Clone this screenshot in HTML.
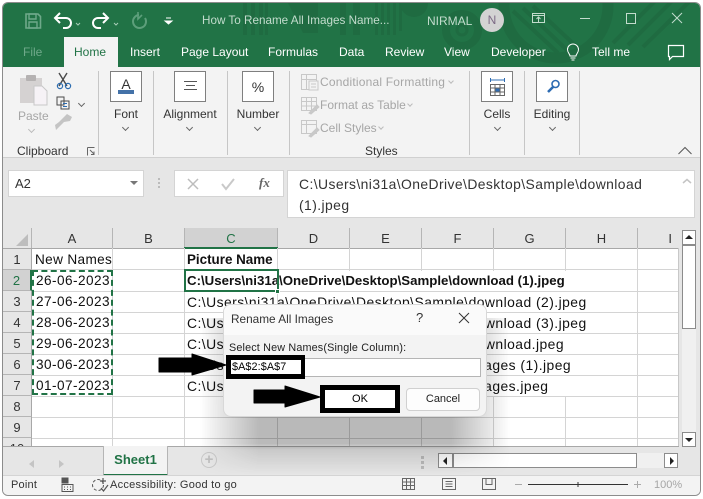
<!DOCTYPE html>
<html><head><meta charset="utf-8"><style>
*{box-sizing:border-box}
html,body{margin:0;padding:0;width:703px;height:499px;overflow:hidden;background:#fff}
body{font-family:"Liberation Sans",sans-serif;position:relative}
.a{position:absolute;white-space:nowrap}
.tab{position:absolute;top:44px;font-size:12px;color:#fff;line-height:16px;white-space:nowrap}
.b{position:absolute;top:71px;width:32px;height:31px;background:#fff;border:1px solid #7f7f7f}
.rl{position:absolute;font-size:12px;color:#333;line-height:15px;white-space:nowrap;text-align:center}
.g{color:#a6a6a6}
.sep{position:absolute;top:71px;width:1px;height:84px;background:#c6c6c6}
.ch{position:absolute;top:228px;height:20px;font-size:13px;color:#333;text-align:center;line-height:21px;border-right:1px solid #b5b5b5;background:#e6e6e6}
.rh{position:absolute;left:3px;width:29px;height:21px;font-size:13px;color:#333;text-align:center;line-height:21px;background:#e6e6e6;border-bottom:1px solid #b5b5b5;border-right:1px solid #a8a8a8}
.v{position:absolute;top:248px;width:1px;height:198px;background:#d4d4d4}
.h{position:absolute;left:32px;width:646px;height:1px;background:#d4d4d4}
.c{position:absolute;font-size:13.6px;color:#111;line-height:18px;white-space:nowrap}
.d{letter-spacing:.45px}
.p{font-size:13.9px;letter-spacing:.45px}
.chev{position:absolute;width:5px;height:5px;border-right:1px solid #666;border-bottom:1px solid #666;transform:rotate(45deg)}
</style></head><body>
<!-- window -->
<div class="a" style="left:2px;top:2px;width:699px;height:494px;background:#e6e6e6;border:1px solid #8c8c8c;border-radius:6px;overflow:hidden"></div>
<div class="a" style="left:3px;top:3px;width:697px;height:64px;background:#217346;border-radius:5px 5px 0 0;overflow:hidden">
<svg width="697" height="64" style="position:absolute;left:0;top:0">
<g fill="#1f6b41">
<rect x="240" y="0" width="4" height="32"/><rect x="248" y="0" width="4" height="32"/><rect x="256" y="0" width="4" height="32"/><rect x="262" y="0" width="3" height="32"/>
<polygon points="285,0 315,0 315,30 300,30"/><rect x="337" y="0" width="6" height="32"/><rect x="350" y="0" width="7" height="32"/>
<rect x="372" y="0" width="3" height="32"/><rect x="378" y="0" width="3" height="32"/><rect x="384" y="0" width="3" height="32"/><rect x="390" y="0" width="3" height="32"/><rect x="396" y="0" width="3" height="28"/>
<circle cx="411" cy="0" r="14"/>
</g>
<circle cx="459" cy="27" r="16" fill="none" stroke="#1f6b41" stroke-width="8"/>
<circle cx="459" cy="27" r="5" fill="none" stroke="#1f6b41" stroke-width="3"/>
<circle cx="553" cy="3" r="52" fill="none" stroke="#1f6b41" stroke-width="11"/>
<g stroke="#1f6b41" stroke-width="4"><path d="M510 8 L555 50M520 5 L565 48M530 3 L575 45"/><path d="M610 40 L655 -5M625 42 L672 -5M640 44 L690 -5"/></g>
</svg></div>
<!-- QAT -->
<svg class="a" style="left:20px;top:8px" width="180" height="24" fill="none">
<path d="M6 6h12l2.500 2.500V20H6z" stroke="#6fa98a" stroke-width="1.600"/><path d="M9 6h7v5H9zM9 14h8v6H9z" stroke="#6fa98a" stroke-width="1.400"/>
<path d="M36 10h10a4.500 4.500 0 0 1 0 10h-3" stroke="#fff" stroke-width="2"/><path d="M40 5l-5 5 5 5" stroke="#fff" stroke-width="2"/>
<path d="M56 15l2 2 2-2" stroke="#a8cdb8"/>
<path d="M87 10H78a4.500 4.500 0 0 0 0 10h3" stroke="#fff" stroke-width="2"/><path d="M83 5l5 5-5 5" stroke="#fff" stroke-width="2"/>
<path d="M94 15l2 2 2-2" stroke="#a8cdb8"/>
<path d="M119 7a6.500 6.500 0 1 0 6 3" stroke="#5d9f7b" stroke-width="2"/><path d="M118 4v7l4-4" stroke="#5d9f7b" stroke-width="1.600"/>
<path d="M146 10h5M145 13h7l-3.500 3z" stroke="#fff" fill="#fff" stroke-width="1"/>
</svg>
<div class="a" style="left:202px;top:13px;font-size:11.7px;color:#c3dccd;line-height:16px">How To Rename All Images Name...</div>
<div class="a" style="left:427px;top:13px;font-size:12px;color:#c3dccd;line-height:16px">NIRMAL</div>
<div class="a" style="left:480px;top:8px;width:24px;height:24px;border-radius:12px;background:#d3d3d3;color:#7c6a85;font-size:12px;text-align:center;line-height:24px">N</div>
<svg class="a" style="left:530px;top:8px" width="165" height="22" fill="none" stroke="#c3dccd">
<path d="M2.500 5.500h12v9h-12zM2.500 7.500h12M8.500 14v-5M6.500 11l2-2 2 2"/>
<path d="M50 10.500h10" stroke-width="1"/>
<rect x="96.500" y="5.500" width="9" height="10"/>
<path d="M142 5l10 10M152 5l-10 10"/>
</svg>
<!-- tabs -->
<div class="tab" style="left:23px;color:#6fa98a">File</div>
<div class="a" style="left:64px;top:37px;width:54px;height:30px;background:#f3f3f3"></div>
<div class="tab" style="left:74px;color:#217346">Home</div>
<div class="tab" style="left:130px">Insert</div>
<div class="tab" style="left:181px">Page Layout</div>
<div class="tab" style="left:268px">Formulas</div>
<div class="tab" style="left:339px">Data</div>
<div class="tab" style="left:385px">Review</div>
<div class="tab" style="left:444px">View</div>
<div class="tab" style="left:491px">Developer</div>
<div class="tab" style="left:592px">Tell me</div>
<svg class="a" style="left:565px;top:43px" width="130" height="20" fill="none" stroke="#fff">
<path d="M5 13c0-2-2.500-3-2.500-6.500a5.500 5.500 0 0 1 11 0C13.500 10 11 11 11 13zM5.500 15h5M6.500 17h3"/>
<path d="M103.500 2.500h15v11h-11l-3 3v-3h-1z" stroke-width="1.200"/>
</svg>
<!-- ribbon -->
<div class="a" style="left:3px;top:67px;width:697px;height:91px;background:#f3f3f3;border-bottom:1px solid #d0d0d0"></div>
<svg class="a" style="left:15px;top:70px" width="70" height="66" fill="none">
<rect x="5" y="8" width="22" height="25" fill="#d5d2d2"/><rect x="11" y="5" width="10" height="6" rx="1" fill="#b5b2b2"/>
<path d="M19 16h8l5 5v14H19z" fill="#f6f2f6" stroke="#c8c8c8"/>
<path d="M44 3l8 13M52 3L44 16" stroke="#4a4a4a" stroke-width="1.400"/><circle cx="45" cy="16" r="2.600" stroke="#2b6cb0" stroke-width="1.200"/><circle cx="53" cy="16" r="2.600" stroke="#2b6cb0" stroke-width="1.200"/>
<path d="M42 27h7v8h-7zM46 31h8v8h-8z" stroke="#4a4a4a" fill="#f3f3f3"/><path d="M48 33.500h4M48 36.500h4" stroke="#2b6cb0"/>
<path d="M41 60l8-8 6-1 2-4-5-3-4 4-4 4-4 3z" fill="#c4c4c4"/>
</svg>
<div class="rl g" style="left:18px;top:109px;width:28px">Paste</div>
<div class="chev" style="left:29px;top:127px;border-color:#bbb"></div>
<div class="chev" style="left:79px;top:101px"></div>
<div class="rl" style="left:17px;top:144px">Clipboard</div>
<svg class="a" style="left:85px;top:146px" width="12" height="11" fill="none" stroke="#666"><path d="M2.500 1.500h7M2.500 1.500v8M5 4l4 4M9 5.500V8.500H6" /></svg>
<div class="sep" style="left:98px"></div><div class="sep" style="left:153px"></div><div class="sep" style="left:227px"></div><div class="sep" style="left:289px"></div><div class="sep" style="left:469px"></div><div class="sep" style="left:524px"></div><div class="sep" style="left:579px"></div>
<div class="b" style="left:110px"><div class="a" style="left:7px;top:5px;width:16px;text-align:center;font-size:14px;color:#333;line-height:14px">A</div><div class="a" style="left:7px;top:18px;width:16px;height:4px;background:#4472a8"></div></div>
<div class="rl" style="left:110px;top:107px;width:32px">Font</div><div class="chev" style="left:123px;top:125px"></div>
<div class="b" style="left:174px"><svg style="position:absolute;left:8px;top:9px" width="15" height="12" stroke="#555"><path d="M1 .5h13M3 4.500h9M1 8.500h13"/></svg></div>
<div class="rl" style="left:160px;top:107px;width:60px">Alignment</div><div class="chev" style="left:187px;top:125px"></div>
<div class="b" style="left:242px"><div class="a" style="left:0;top:7px;width:30px;text-align:center;font-size:14px;color:#333;line-height:16px">%</div></div>
<div class="rl" style="left:234px;top:107px;width:48px">Number</div><div class="chev" style="left:255px;top:125px"></div>
<svg class="a" style="left:300px;top:72px" width="20" height="66" fill="none" stroke="#c8c8c8">
<path d="M1.500 2.500h15v15h-15zM1.500 7.500h15M6.500 2.500v15"/><rect x="9" y="9" width="9" height="9" fill="#f3f3f3"/><path d="M11 12h5M11 15h5" />
<path d="M1.500 25.500h15v13h-15zM1.500 29.500h15M6.500 25.500v13M11.500 25.500v13M1.500 34h15"/><path d="M9 41l8-8 2 2-8 7z" fill="#c9c9c9"/>
<path d="M1.500 48.500h15v13h-15zM1.500 52.500h15M6.500 48.500v13"/><path d="M9 64l8-8 2 2-8 7z" fill="#c9c9c9"/>
</svg>
<div class="rl g" style="left:320px;top:75px;letter-spacing:.2px">Conditional Formatting</div>
<div class="rl g" style="left:320px;top:98px">Format as Table</div>
<div class="rl g" style="left:320px;top:121px">Cell Styles</div>
<div class="chev" style="left:449px;top:79px;border-color:#bbb;width:4px;height:4px"></div>
<div class="chev" style="left:408px;top:102px;border-color:#bbb;width:4px;height:4px"></div>
<div class="chev" style="left:379px;top:125px;border-color:#bbb;width:4px;height:4px"></div>
<div class="rl" style="left:365px;top:144px">Styles</div>
<div class="b" style="left:481px"><svg style="position:absolute;left:7px;top:5px" width="18" height="21" fill="none" stroke="#666"><path d="M1.500 1v4M15.500 1v4M2 3h13" stroke="#2e6cb3"/><path d="M1.500 7.500h14v11h-14zM1.500 11h14M1.500 15h14M6 7.500v11M11 7.500v11"/><rect x="6" y="11" width="5" height="4" fill="#2e6cb3"/></svg></div>
<div class="rl" style="left:481px;top:107px;width:32px">Cells</div><div class="chev" style="left:495px;top:125px"></div>
<div class="b" style="left:536px"><svg style="position:absolute;left:8px;top:6px" width="16" height="18" fill="none" stroke="#2e6cb3"><circle cx="10.500" cy="6" r="3.500" stroke-width="1.600"/><path d="M8 9l-5 5" stroke-width="2.600"/></svg></div>
<div class="rl" style="left:532px;top:107px;width:40px">Editing</div><div class="chev" style="left:550px;top:125px"></div>
<svg class="a" style="left:677px;top:146px" width="16" height="10" fill="none" stroke="#555"><path d="M1.500 8L8 1.500 14.500 8"/></svg>
<!-- formula bar -->
<div class="a" style="left:8px;top:170px;width:136px;height:27px;background:#fff;border:1px solid #d4d4d4;font-size:13px;color:#333;line-height:25px;padding-left:6px">A2</div>
<div class="a" style="left:130px;top:181px;border-left:4px solid transparent;border-right:4px solid transparent;border-top:4px solid #777"></div>
<div class="a" style="left:158px;top:178px;width:2px;height:2px;background:#bbb;box-shadow:0 4px #bbb,0 8px #bbb"></div>
<div class="a" style="left:174px;top:170px;width:110px;height:27px;background:#fff;border:1px solid #d4d4d4"></div>
<svg class="a" style="left:186px;top:175px" width="90" height="18" fill="none"><path d="M2 4l10 10M12 4L2 14" stroke="#bdbdbd" stroke-width="1.500"/><path d="M36 9l4 5 8-10" stroke="#c9c9c9" stroke-width="2"/></svg>
<div class="a" style="left:259px;top:174px;font:italic bold 13px 'Liberation Serif',serif;color:#666;line-height:17px">fx</div>
<div class="a" style="left:287px;top:170px;width:408px;height:48px;background:#fff;border:1px solid #d4d4d4;font-size:13.9px;letter-spacing:.42px;color:#333;line-height:21px;padding:3px 0 0 11px;white-space:normal">C:\Users\ni31a\OneDrive\Desktop\Sample\download<br>(1).jpeg</div>
<svg class="a" style="left:682px;top:178px" width="10" height="7" fill="none" stroke="#c4c4c4" stroke-width="1.500"><path d="M1 5l4-3.500L9 5"/></svg>
<!-- grid -->
<div class="a" style="left:3px;top:228px;width:676px;height:218px;background:#fff"></div>
<div class="ch" style="left:3px;width:29px"></div>
<div class="a" style="left:16px;top:234px;width:0;height:0;border-left:12px solid transparent;border-bottom:12px solid #bdbdbd"></div>
<div class="ch" style="left:32px;width:81px">A</div>
<div class="ch" style="left:113px;width:72px">B</div>
<div class="ch" style="left:185px;width:93px;background:#d2d2d2;color:#217346">C</div>
<div class="ch" style="left:278px;width:72px">D</div>
<div class="ch" style="left:350px;width:72px">E</div>
<div class="ch" style="left:422px;width:72px">F</div>
<div class="ch" style="left:494px;width:72px">G</div>
<div class="ch" style="left:566px;width:72px">H</div>
<div class="ch" style="left:638px;width:41px;border-right:0;text-align:right;padding-right:7px">I</div>
<div class="a" style="left:3px;top:248px;width:676px;height:1px;background:#a8a8a8"></div>
<div class="a" style="left:184px;top:247px;width:94px;height:2px;background:#217346"></div>
<div class="rh" style="top:249px">1</div>
<div class="rh" style="top:270px;background:#d2d2d2;color:#217346;border-right:2px solid #217346">2</div>
<div class="rh" style="top:291px">3</div><div class="rh" style="top:312px">4</div><div class="rh" style="top:333px">5</div><div class="rh" style="top:354px">6</div><div class="rh" style="top:375px">7</div><div class="rh" style="top:396px">8</div><div class="rh" style="top:417px">9</div><div class="rh" style="top:438px;height:8px;overflow:hidden;border-bottom:0">10</div>
<div class="v" style="left:112px"></div><div class="v" style="left:184px"></div><div class="v" style="left:277px"></div><div class="v" style="left:421px"></div><div class="v" style="left:493px"></div><div class="v" style="left:565px"></div><div class="v" style="left:637px"></div><div class="v" style="left:349px"></div>
<div class="a" style="left:678px;top:248px;width:1px;height:198px;background:#c8c8c8"></div>
<div class="h" style="top:269px"></div><div class="h" style="top:291px"></div><div class="h" style="top:312px"></div><div class="h" style="top:333px"></div><div class="h" style="top:354px"></div><div class="h" style="top:375px"></div><div class="h" style="top:396px"></div><div class="h" style="top:417px"></div><div class="h" style="top:438px"></div>
<div class="c" style="left:35px;top:251px;font-size:13.6px;letter-spacing:.35px">New Names</div>
<div class="c" style="left:187px;top:251px;font-weight:bold;font-size:13.400px">Picture Name</div>
<div class="a" style="left:278px;top:271px;width:309px;height:20px;background:#fff"></div>
<div class="a" style="left:278px;top:292px;width:309px;height:20px;background:#fff"></div>
<div class="a" style="left:278px;top:313px;width:309px;height:20px;background:#fff"></div>
<div class="a" style="left:278px;top:334px;width:309px;height:20px;background:#fff"></div>
<div class="a" style="left:278px;top:355px;width:309px;height:20px;background:#fff"></div>
<div class="a" style="left:278px;top:376px;width:309px;height:20px;background:#fff"></div>
<div class="c d" style="left:36px;top:272px">26-06-2023</div>
<div class="c d" style="left:36px;top:293px">27-06-2023</div>
<div class="c d" style="left:36px;top:314px">28-06-2023</div>
<div class="c d" style="left:36px;top:335px">29-06-2023</div>
<div class="c d" style="left:36px;top:356px">30-06-2023</div>
<div class="c d" style="left:36px;top:377px">01-07-2023</div>
<div class="c" style="left:187px;top:272px;font-weight:bold;font-size:13.25px">C:\Users\ni31a\OneDrive\Desktop\Sample\download (1).jpeg</div>
<div class="c p" style="left:187px;top:293px">C:\Users\ni31a\OneDrive\Desktop\Sample\download (2).jpeg</div>
<div class="c p" style="left:187px;top:314px">C:\Users\ni31a\OneDrive\Desktop\Sample\download (3).jpeg</div>
<div class="c p" style="left:187px;top:335px">C:\Users\ni31a\OneDrive\Desktop\Sample\download.jpeg</div>
<div class="c p" style="left:187px;top:356px">C:\Users\ni31a\OneDrive\Desktop\Sample\images (1).jpeg</div>
<div class="c p" style="left:187px;top:377px">C:\Users\ni31a\OneDrive\Desktop\Sample\images.jpeg</div>
<!-- selection -->
<div class="a" style="left:32px;top:270px;width:81px;height:125px;border:2px dashed #217346"></div>
<div class="a" style="left:184px;top:269px;width:95px;height:23px;border:2px solid #217346"></div>
<div class="a" style="left:275px;top:289px;width:5px;height:5px;background:#217346;border:1px solid #fff"></div>
<!-- scrollbars -->
<div class="a" style="left:682px;top:230px;width:14px;height:217px;background:#f0f0f0"></div>
<div class="a" style="left:682px;top:230px;width:14px;height:15px;background:#fff;border:1px solid #8c8c8c"></div>
<div class="a" style="left:685px;top:235px;border-left:4px solid transparent;border-right:4px solid transparent;border-bottom:4px solid #222"></div>
<div class="a" style="left:682px;top:245px;width:14px;height:84px;background:#fff;border:1px solid #8c8c8c"></div>
<div class="a" style="left:682px;top:432px;width:14px;height:15px;background:#fff;border:1px solid #8c8c8c"></div>
<div class="a" style="left:685px;top:438px;border-left:4px solid transparent;border-right:4px solid transparent;border-top:4px solid #222"></div>
<div class="a" style="left:3px;top:446px;height:1px;background:#a8a8a8;width:676px"></div>
<!-- sheet bar -->
<div class="a" style="left:29px;top:460px;border-right:5px solid #c4c4c4;border-top:4px solid transparent;border-bottom:4px solid transparent"></div>
<div class="a" style="left:59px;top:460px;border-left:5px solid #c4c4c4;border-top:4px solid transparent;border-bottom:4px solid transparent"></div>
<div class="a" style="left:103px;top:446px;width:65px;height:30px;background:#f3f3f3;border-left:1px solid #b5b5b5;border-right:1px solid #b5b5b5;border-bottom:2px solid #217346;color:#217346;font-size:13px;font-weight:bold;text-align:center;line-height:27px">Sheet1</div>
<div class="a" style="left:201px;top:452px;width:16px;height:16px;border-radius:8px;border:1.500px solid #c8c8c8;color:#c0c0c0;font-size:15px;font-weight:bold;text-align:center;line-height:13px">+</div>
<div class="a" style="left:421px;top:456px;width:3px;height:3px;background:#bbb;box-shadow:0 5px #bbb,0 10px #bbb"></div>
<div class="a" style="left:438px;top:453px;width:240px;height:15px;background:#f0f0f0"></div>
<div class="a" style="left:438px;top:453px;width:15px;height:15px;background:#fff;border:1px solid #8c8c8c"></div>
<div class="a" style="left:443px;top:457px;border-right:4px solid #222;border-top:4px solid transparent;border-bottom:4px solid transparent"></div>
<div class="a" style="left:453px;top:453px;width:184px;height:15px;background:#fff;border:1px solid #8c8c8c"></div>
<div class="a" style="left:664px;top:453px;width:14px;height:15px;background:#fff;border:1px solid #8c8c8c"></div>
<div class="a" style="left:670px;top:457px;border-left:4px solid #222;border-top:4px solid transparent;border-bottom:4px solid transparent"></div>
<!-- status -->
<div class="a" style="left:3px;top:475px;width:697px;height:20px;background:#f3f3f3;border-top:1px solid #d4d4d4;border-radius:0 0 5px 5px"></div>
<div class="a" style="left:11px;top:478px;font-size:11px;color:#333;line-height:14px;letter-spacing:.2px">Point</div>
<svg class="a" style="left:60px;top:476px" width="56" height="18" fill="none" stroke="#555"><rect x="2" y="2" width="6" height="5" fill="#555"/><path d="M2 8.500h11v7H2zM4 11h1M7 11h1M10 11h1M4 13.500h1M7 13.500h1M10 13.500h1"/><circle cx="38" cy="9" r="5.500" stroke-dasharray="3 2"/><path d="M43 2v6M40 5h6M41 12l2.500 3 4.500-6" stroke-width="1.200"/></svg>
<div class="a" style="left:110px;top:478px;font-size:11px;letter-spacing:.26px;color:#333;line-height:15px">Accessibility: Good to go</div>
<svg class="a" style="left:400px;top:476px" width="300" height="18" fill="none" stroke="#666"><path d="M2.500 2.500h12v11h-12zM2.500 6h12M2.500 9.500h12M6.500 2.500v11M10.500 2.500v11"/><path d="M42.500 2.500h13v11h-13zM45.500 5.500h7M45.500 8h7M45.500 10.500h7"/><path d="M82.500 2.500h13v11h-13zM86 2.500v6h6v-6"/><path d="M115 8.500h7" stroke="#aaa"/><path d="M128 8.500h100M178 6v5" stroke="#333"/><path d="M234 8.500h7M237.500 5v7" stroke="#aaa"/></svg>
<div class="a" style="left:654px;top:478px;font-size:11px;color:#a6a6a6;line-height:14px">100%</div>
<!-- dialog shadow -->
<div class="a" style="left:200px;top:318px;width:310px;height:157px;background:linear-gradient(to bottom,rgba(0,0,0,.3) 0%,rgba(0,0,0,.27) 80%,rgba(0,0,0,.12) 84%,rgba(0,0,0,0) 100%);-webkit-mask-image:linear-gradient(to right,transparent 0,#000 19%,#000 81%,transparent 100%);mask-image:linear-gradient(to right,transparent 0,#000 19%,#000 81%,transparent 100%)"></div>
<div class="a" style="left:223px;top:304px;width:264px;height:113px;border-radius:8px;background:#f3f3f3;border:1px solid #d8d8d8;overflow:hidden"><div style="height:30px;background:#fafafa"></div></div>
<div class="a" style="left:231px;top:312px;font-size:11.8px;color:#333;line-height:15px">Rename All Images</div>
<div class="a" style="left:416px;top:310px;font-size:13px;color:#333;line-height:16px">?</div>
<svg class="a" style="left:457px;top:311px" width="16" height="16" stroke="#333" fill="none"><path d="M2 2l10 10M12 2L2 12"/></svg>
<div class="a" style="left:229px;top:341px;font-size:10.8px;letter-spacing:.16px;color:#222;line-height:14px">Select New Names(Single Column):</div>
<div class="a" style="left:229px;top:358px;width:252px;height:19px;background:#fff;border:1px solid #b5b5b5"></div>
<div class="a" style="left:226px;top:355px;width:79px;height:24px;background:#fff;border:5px solid #000;border-right-width:4px"></div>
<div class="a" style="left:232px;top:360px;width:57px;height:14px;color:#000;font-size:10.8px;line-height:14px;letter-spacing:.1px">$A$2:$A$7</div>
<div class="a" style="left:320px;top:385px;width:80px;height:28px;background:#fff;border:5px solid #000;font-size:11px;color:#000;text-align:center;line-height:18px">OK</div>
<div class="a" style="left:406px;top:388px;width:74px;height:23px;background:#fdfdfd;border:1px solid #d0d0d0;border-radius:4px;font-size:11px;color:#222;text-align:center;line-height:21px">Cancel</div>
<svg class="a" style="left:150px;top:345px" width="180" height="70"><path d="M9 13H42V9L76 20 42 30V27H9z" fill="#000" stroke="#000" stroke-linejoin="round"/><path d="M104 45H135V41L170 52 135 62V58H104z" fill="#000" stroke="#000" stroke-linejoin="round"/></svg>
</body></html>
